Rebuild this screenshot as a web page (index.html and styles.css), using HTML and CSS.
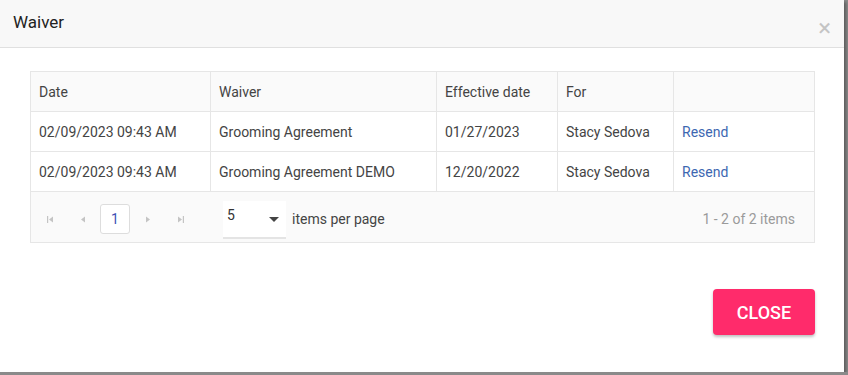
FILE: index.html
```html
<!DOCTYPE html>
<html lang="en">
  <head>
    <meta charset="UTF-8">
    <title>Waiver</title>
    <link rel="stylesheet" href="styles.css">
  </head>
  <body>
    <div class="dialog">
      <!-- Title bar -->
      <div class="dialog-title">
        <span class="title-text">Waiver</span>
        <span class="close-x">&times;</span>
      </div>

      <div class="dialog-body">
        <div class="grid">
          <table>
            <thead>
              <tr>
                <th class="col-date">Date</th>
                <th class="col-waiver">Waiver</th>
                <th class="col-eff">Effective date</th>
                <th class="col-for">For</th>
                <th></th>
              </tr>
            </thead>
            <tbody>
              <tr>
                <td>02/09/2023 09:43 AM</td>
                <td>Grooming Agreement</td>
                <td>01/27/2023</td>
                <td>Stacy Sedova</td>
                <td><a href="#" class="link">Resend</a></td>
              </tr>
              <tr>
                <td>02/09/2023 09:43 AM</td>
                <td>Grooming Agreement DEMO</td>
                <td>12/20/2022</td>
                <td>Stacy Sedova</td>
                <td><a href="#" class="link">Resend</a></td>
              </tr>
            </tbody>
          </table>

          <!-- Pager -->
          <div class="pager">
            <div class="pager-nav">
              <span class="pager-arrow">
                <svg width="8" height="9" viewBox="0 0 8 9"><rect x="1" y="1" width="1.2" height="7" fill="#c4c4c4"/><path d="M7 1.5 L3 4.5 L7 7.5 Z" fill="#c4c4c4"/></svg>
              </span>
              <span class="pager-arrow">
                <svg width="8" height="9" viewBox="0 0 8 9"><path d="M6 1.5 L2 4.5 L6 7.5 Z" fill="#c4c4c4"/></svg>
              </span>
              <span class="pager-page">1</span>
              <span class="pager-arrow">
                <svg width="8" height="9" viewBox="0 0 8 9"><path d="M2 1.5 L6 4.5 L2 7.5 Z" fill="#c4c4c4"/></svg>
              </span>
              <span class="pager-arrow">
                <svg width="8" height="9" viewBox="0 0 8 9"><path d="M1 1.5 L5 4.5 L1 7.5 Z" fill="#c4c4c4"/><rect x="5.8" y="1" width="1.2" height="7" fill="#c4c4c4"/></svg>
              </span>
            </div>
            <div class="pager-size">
              <span class="size-select">
                <span>5</span>
                <svg width="10" height="5" viewBox="0 0 10 5"><path d="M0 0 L10 0 L5 5 Z" fill="#444"/></svg>
              </span>
              <span class="size-label">items per page</span>
            </div>
            <div class="pager-info">1 - 2 of 2 items</div>
          </div>
        </div>
      </div>

      <div class="dialog-actions">
        <button class="btn-close">CLOSE</button>
      </div>
    </div>
  </body>
</html>
```

FILE: styles.css
```css
body {
  margin: 0;
  background-color: #8a8a8a;
  font-family: Roboto, 'Liberation Sans', sans-serif;
  color: #333;
}

.dialog {
  width: 844px;
  height: 372px;
  background-color: #fff;
  box-shadow: 2px 2px 3px rgba(0, 0, 0, 0.35);
  display: flex;
  flex-direction: column;
}

.dialog-title {
  height: 47px;
  background-color: #f8f8f8;
  border-bottom: 1px solid #e0e0e0;
  display: flex;
  align-items: center;
  justify-content: space-between;
  padding: 0 13px 0 13px;
}

.title-text {
  font-size: 17px;
  color: #222;
  padding-bottom: 3px;
}

.close-x {
  font-size: 24px;
  color: #c4c4c4;
  margin-top: 8px;
}

.dialog-body {
  padding: 23px 29px 0 30px;
}

.grid {
  border: 1px solid #e6e6e6;
}

table {
  width: 100%;
  border-collapse: collapse;
  font-size: 14px;
}

th {
  background-color: #fafafa;
  font-weight: normal;
  text-align: left;
  color: #333;
}

th,
td {
  height: 39px;
  padding: 0 8px;
  border-right: 1px solid #e6e6e6;
  border-bottom: 1px solid #e6e6e6;
  color: #444;
}

th:last-child,
td:last-child {
  border-right: none;
}

.col-date { width: 163px; }
.col-waiver { width: 209px; }
.col-eff { width: 104px; }
.col-for { width: 99px; }

.link {
  color: #3d67b1;
  text-decoration: none;
}

.pager {
  height: 50px;
  box-sizing: border-box;
  background-color: #fafafa;
  display: flex;
  align-items: center;
  font-size: 14px;
  padding: 4px 19px 0 2px;
}

.pager-nav {
  display: flex;
  align-items: center;
}

.pager-arrow {
  width: 33px;
  display: flex;
  justify-content: center;
}

.pager-page {
  width: 28px;
  height: 28px;
  border: 1px solid #ddd;
  border-radius: 3px;
  background-color: #fff;
  color: #3f51b5;
  display: flex;
  align-items: center;
  justify-content: center;
  margin: 0 1px 0 1px;
}

.pager-size {
  display: flex;
  align-items: center;
  margin-left: 26px;
}

.size-select {
  width: 63px;
  height: 38px;
  background-color: #fff;
  border-bottom: 2px solid #e4e4e4;
  display: flex;
  align-items: flex-start;
  justify-content: space-between;
  padding: 6px 7px 0 4px;
  box-sizing: border-box;
  color: #333;
  margin-top: 2px;
}

.size-select svg {
  margin-top: 10px;
}

.size-label {
  margin-left: 6px;
  color: #444;
}

.pager-info {
  margin-left: auto;
  color: #9a9a9a;
}

.dialog-actions {
  display: flex;
  justify-content: flex-end;
  padding: 46px 29px 0 0;
}

.btn-close {
  width: 102px;
  height: 46px;
  background-color: #ff2b6b;
  color: #fff;
  border: none;
  border-radius: 4px;
  font-family: Roboto, 'Liberation Sans', sans-serif;
  font-size: 18px;
  font-weight: 500;
  box-shadow: 0 2px 3px rgba(0, 0, 0, 0.25);
  cursor: pointer;
}
```
